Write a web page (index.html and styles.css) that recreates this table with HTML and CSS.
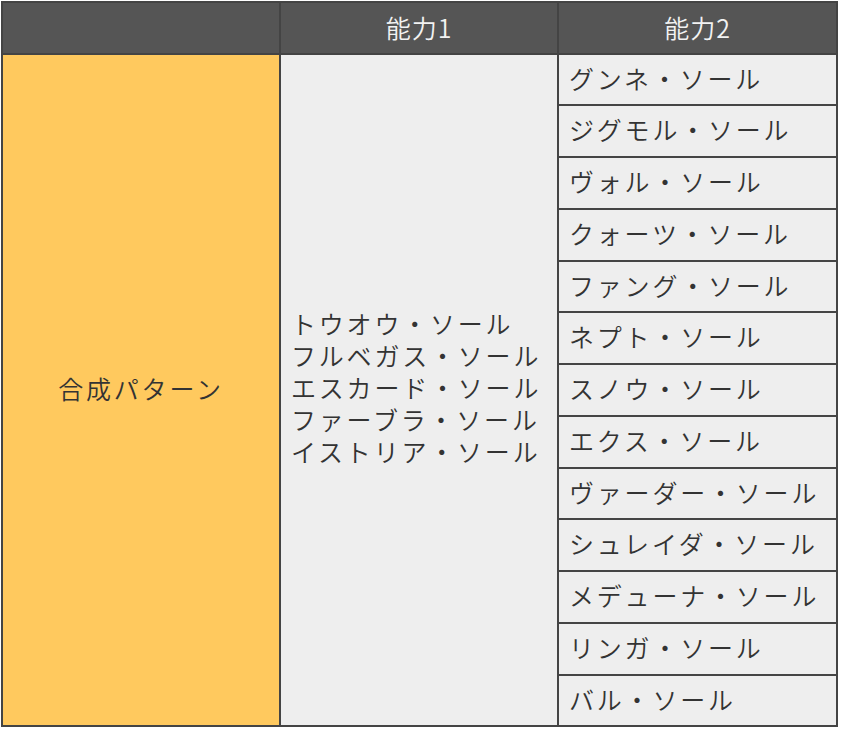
FILE: index.html
```html
<!DOCTYPE html>
<html lang="ja">
<head>
<meta charset="utf-8">
<link rel="stylesheet" href="styles.css">
</head>
<body>
<table class="tbl">
  <thead>
    <tr>
      <th class="c1"></th>
      <th class="c2">能力1</th>
      <th class="c3">能力2</th>
    </tr>
  </thead>
  <tbody>
    <tr>
      <td class="label" rowspan="13">合成パターン</td>
      <td class="list" rowspan="13">トウオウ・ソール<br>フルベガス・ソール<br>エスカード・ソール<br>ファーブラ・ソール<br>イストリア・ソール</td>
      <td class="item">グンネ・ソール</td>
    </tr>
    <tr><td class="item">ジグモル・ソール</td></tr>
    <tr><td class="item">ヴォル・ソール</td></tr>
    <tr><td class="item">クォーツ・ソール</td></tr>
    <tr><td class="item">ファング・ソール</td></tr>
    <tr><td class="item">ネプト・ソール</td></tr>
    <tr><td class="item">スノウ・ソール</td></tr>
    <tr><td class="item">エクス・ソール</td></tr>
    <tr><td class="item">ヴァーダー・ソール</td></tr>
    <tr><td class="item">シュレイダ・ソール</td></tr>
    <tr><td class="item">メデューナ・ソール</td></tr>
    <tr><td class="item">リンガ・ソール</td></tr>
    <tr><td class="item">バル・ソール</td></tr>
  </tbody>
</table>
</body>
</html>
```

FILE: styles.css
```css
html, body {
  margin: 0;
  padding: 0;
  background: #ffffff;
}
body {
  padding: 1px 0 0 1px;
  font-family: "Noto Sans CJK JP", "Noto Sans", sans-serif;
  color: #333333;
}
.tbl {
  border-collapse: collapse;
  border: 2px solid #444444;
  font-size: 25px;
  font-weight: 350;
  letter-spacing: 2.8px;
}
.tbl th,
.tbl td {
  border: 2px solid #444444;
  line-height: 32px;
}
.tbl th {
  background: #555555;
  color: #f2f2f2;
  font-weight: 350;
  height: 32px;
  padding: 7.5px 0 10px;
  letter-spacing: 1px;
  text-align: center;
}
.c1 { width: 276px; }
.c2 { width: 276px; }
.c3 { width: 277px; }
.label {
  background: #ffc95e;
  text-align: center;
  vertical-align: middle;
  padding: 0 0 4px;
}
.list {
  background: #eeeeee;
  vertical-align: middle;
  padding: 0 10px 5px;
}
.item {
  background: #eeeeee;
  padding: 7px 10px 10.75px;
  white-space: nowrap;
}
```
